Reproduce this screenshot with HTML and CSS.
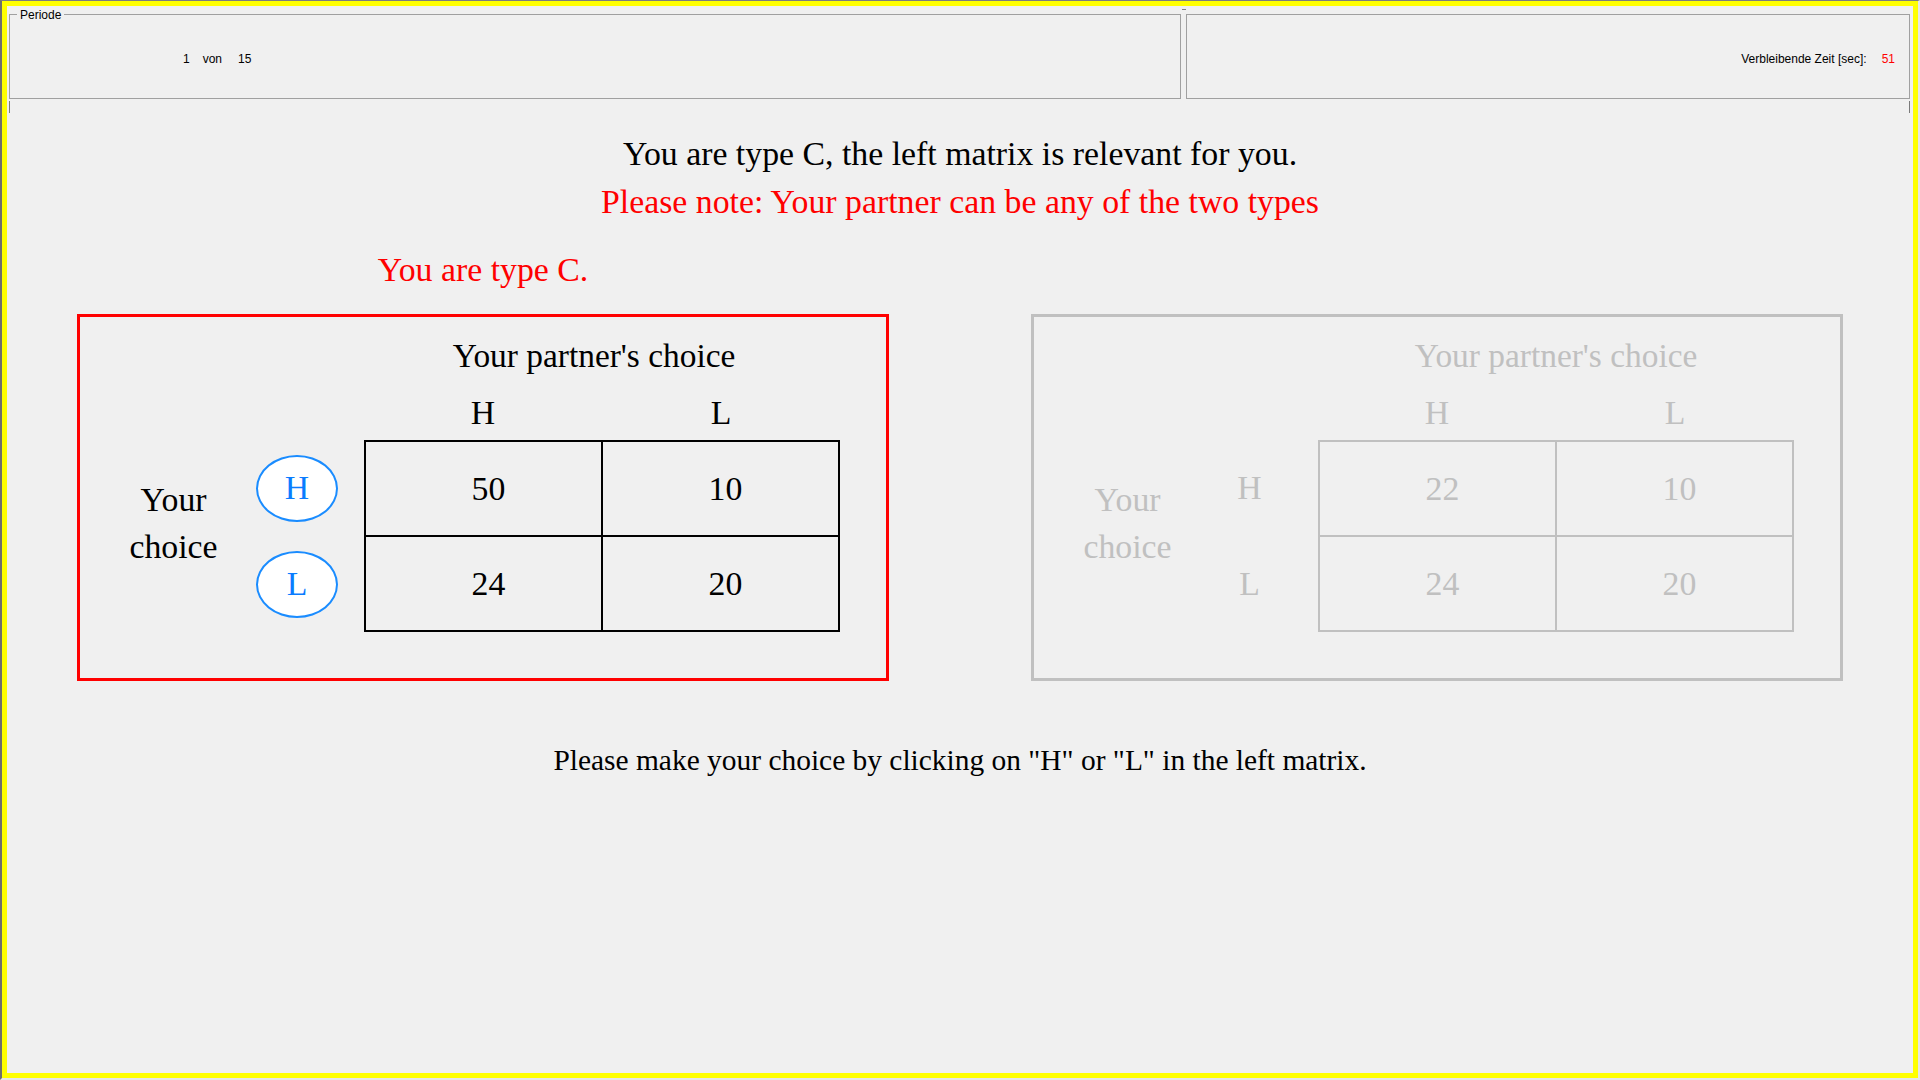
FILE: index.html
```html
<!DOCTYPE html>
<html lang="en">
<head>
<meta charset="utf-8">
<title>Decision screen</title>
<link rel="stylesheet" href="styles.css">
</head>
<body>
<div class="frame">
  <div class="screen">
    <div class="header">
      <div class="panel panel-left">
        <span class="legend">Periode</span>
        <span class="period-num">1</span>
        <span class="period-von">von</span>
        <span class="period-total">15</span>
      </div>
      <div class="splitter"><span class="dash"></span></div>
      <div class="panel panel-right">
        <span class="time-label">Verbleibende Zeit [sec]:</span>
        <span class="time-value">51</span>
      </div>
    </div>
    <div class="ticks"><span class="tick"></span><span class="tick"></span></div>

    <main class="main">
      <p class="intro">You are type C, the left matrix is relevant for you.</p>
      <p class="note">Please note: Your partner can be any of the two types</p>

      <div class="games">
        <p class="type-label">You are type C.</p>
        <div></div>

        <div class="box box-active">
          <div class="box-title">Your partner's choice</div>
          <div class="box-heads"><span>H</span><span>L</span></div>
          <div class="box-body">
            <div class="row-label">Your<br>choice</div>
            <div class="choices">
              <div class="choice"><button class="choice-btn" type="button">H</button></div>
              <div class="choice"><button class="choice-btn" type="button">L</button></div>
            </div>
            <div class="matrix">
              <div class="cell">50</div>
              <div class="cell">10</div>
              <div class="cell">24</div>
              <div class="cell">20</div>
            </div>
          </div>
        </div>

        <div class="box box-inactive">
          <div class="box-title">Your partner's choice</div>
          <div class="box-heads"><span>H</span><span>L</span></div>
          <div class="box-body">
            <div class="row-label">Your<br>choice</div>
            <div class="choices">
              <div class="choice"><span class="choice-text">H</span></div>
              <div class="choice"><span class="choice-text">L</span></div>
            </div>
            <div class="matrix">
              <div class="cell">22</div>
              <div class="cell">10</div>
              <div class="cell">24</div>
              <div class="cell">20</div>
            </div>
          </div>
        </div>
      </div>

      <p class="instruction">Please make your choice by clicking on "H" or "L" in the left matrix.</p>
    </main>
  </div>
</div>
</body>
</html>
```

FILE: styles.css
```css
html, body {
  margin: 0;
  padding: 0;
  background: #f0f0f0;
}

.frame {
  box-sizing: border-box;
  width: 1920px;
  height: 1080px;
  border-style: solid;
  border-width: 1px 2px 2px 2px;
  border-color: #7d7d7d #e6e6e6 #e6e6e6 #6e6e6e;
}

.screen {
  box-sizing: border-box;
  height: 100%;
  border: 5px solid #ffff00;
  background: #f0f0f0;
  font-family: "Liberation Serif", "Times New Roman", serif;
  color: #000;
}

/* ---------- header ---------- */
.header {
  display: flex;
  padding: 8px 3px 0 2px;
  font-family: "Liberation Sans", Arial, sans-serif;
  font-size: 12px;
}

.panel {
  position: relative;
  box-sizing: border-box;
  height: 85px;
  border: 1px solid #a0a0a0;
  display: flex;
  align-items: center;
  padding-top: 5px;
}

.panel-left {
  width: 1172px;
  padding-left: 173px;
}

.legend {
  position: absolute;
  left: 7px;
  top: -7px;
  padding: 0 3px;
  line-height: 14px;
  background: #f0f0f0;
}

.period-von {
  margin-left: 13px;
}

.period-total {
  margin-left: 16px;
}

.splitter {
  width: 5px;
  display: flex;
  justify-content: center;
  align-self: flex-start;
  margin-top: -5px;
}

.dash {
  display: block;
  width: 4px;
  height: 1px;
  background: #808080;
}

.panel-right {
  width: 724px;
  justify-content: flex-end;
  padding-right: 14px;
}

.time-label {
  margin-left: -1px;
}

.time-value {
  color: #ff0000;
  margin-left: 15px;
}

.ticks {
  display: flex;
  justify-content: space-between;
  height: 14px;
  box-sizing: border-box;
  padding: 2px 3px 0 2px;
}

.tick {
  width: 1px;
  height: 12px;
  background: #7a7a7a;
}

/* ---------- main ---------- */
.main {
  padding-top: 17px;
  font-size: 33.8px;
}

.main p {
  margin: 0;
}

.intro,
.note {
  text-align: center;
  line-height: 48px;
}

.note {
  color: #ff0000;
}

.games {
  display: grid;
  grid-template-columns: 812px 812px;
  column-gap: 142px;
  row-gap: 20px;
  justify-content: center;
  margin-top: 20px;
}

.games .type-label {
  color: #ff0000;
  text-align: center;
  line-height: 48px;
}

.box {
  box-sizing: border-box;
  height: 367px;
  border: 3px solid #ff0000;
  padding-top: 19px;
}

.box-title {
  box-sizing: border-box;
  margin-left: 284px;
  width: 476px;
  text-align: center;
  line-height: 40px;
  font-size: 33.4px;
  white-space: nowrap;
}

.box-active .box-title {
  padding-right: 16px;
}

.box-heads {
  margin-left: 284px;
  margin-top: 17px;
  display: grid;
  grid-template-columns: 238px 238px;
  line-height: 40px;
  text-align: center;
}

.box-body {
  display: flex;
  margin-top: 7px;
}

.row-label {
  box-sizing: border-box;
  width: 176px;
  padding-left: 11px;
  padding-bottom: 26px;
  display: flex;
  align-items: center;
  justify-content: center;
  text-align: center;
  line-height: 47px;
}

.choices {
  width: 82px;
  display: flex;
  flex-direction: column;
}

.choice {
  height: 96px;
  display: flex;
  align-items: center;
  justify-content: center;
}

.choice-text {
  padding-right: 3px;
}

.choice-btn {
  box-sizing: border-box;
  width: 82px;
  height: 67px;
  margin: 0;
  padding: 0 0 1px 0;
  border: 2px solid #1a8cff;
  border-radius: 50%;
  background: #ffffff;
  color: #0a7cff;
  font-family: "Liberation Serif", "Times New Roman", serif;
  font-size: 33.8px;
  line-height: 1;
  cursor: pointer;
}

.matrix {
  margin-left: 26px;
  display: grid;
  grid-template-columns: 237px 237px;
  grid-auto-rows: 95px;
  border-left: 2px solid #000;
  border-top: 2px solid #000;
}

.cell {
  box-sizing: border-box;
  border-right: 2px solid #000;
  border-bottom: 2px solid #000;
  display: flex;
  align-items: center;
  justify-content: center;
  padding-left: 10px;
}

/* inactive (right) matrix */
.box-inactive {
  border-color: #c0c0c0;
  color: #c0c0c0;
}

.box-inactive .matrix {
  border-color: #c0c0c0;
}

.box-inactive .cell {
  border-color: #c0c0c0;
}

.instruction {
  margin-top: 59px !important;
  text-align: center;
  font-size: 29.45px;
  line-height: 40px;
}
```
